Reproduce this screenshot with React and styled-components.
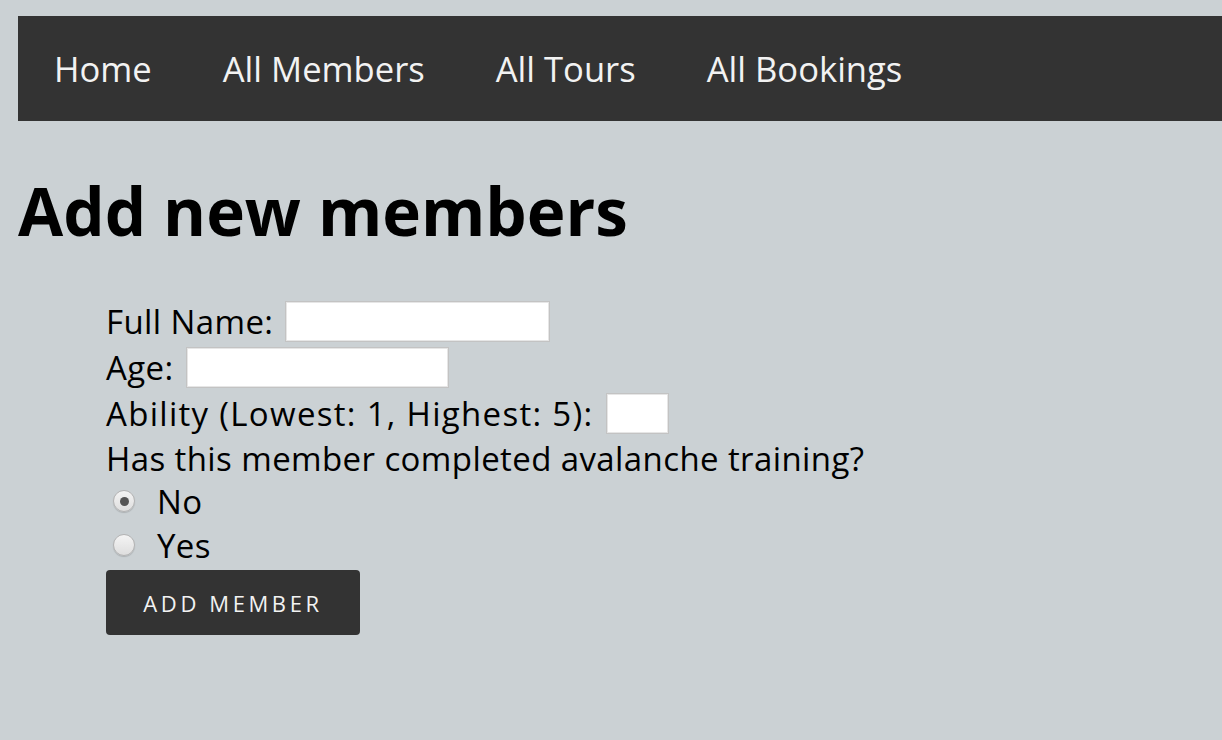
import styled, { createGlobalStyle } from "styled-components";

const GlobalStyle = createGlobalStyle`
  html, body {
    margin: 0;
    padding: 0;
  }

  body {
    background-color: rgb(203, 209, 212);
    font-family: "Open Sans", "Lato", sans-serif;
    color: #000;
  }
`;

const Page = styled.div`
  padding: 16px 0 0 18px;
  min-height: 740px;
  box-sizing: border-box;
`;

const Nav = styled.nav`
  display: flex;
  align-items: center;
  height: 105px;
  background-color: #333333;
`;

const NavLink = styled.a`
  padding: 0 35px 0 36px;
  font-size: 34.6px;
  color: #f2f2f2;
  text-decoration: none;
  cursor: pointer;
`;

const Title = styled.h1`
  margin: 48px 0 45px;
  font-size: 65.5px;
  line-height: 84px;
  font-weight: 700;
`;

const Form = styled.form`
  display: flex;
  flex-direction: column;
  margin-left: 88px;
`;

const Row = styled.label`
  display: flex;
  align-items: center;
  gap: 12px;
  height: ${({ $h }) => $h || 46}px;
  font-size: 33px;
  letter-spacing: ${({ $ls }) => $ls || 0.4}px;
`;

const TextInput = styled.input`
  box-sizing: border-box;
  width: ${({ $w }) => $w}px;
  height: 41px;
  margin: 0;
  padding: 2px 6px;
  border: 1px solid #c3c3c3;
  box-shadow: inset 0 0 0 1px #e6e6e6;
  background: #fff;
  font-size: 24px;
  outline: none;
`;

const Question = styled.p`
  margin: 0;
  height: 42px;
  display: flex;
  align-items: center;
  font-size: 33px;
  letter-spacing: 0.4px;
`;

const Radio = styled.input.attrs({ type: "radio" })`
  appearance: none;
  box-sizing: border-box;
  width: 22px;
  height: 22px;
  margin: 0 0 0 7px;
  border-radius: 50%;
  border: 1px solid #b3b3b3;
  background: linear-gradient(#f4f4f4, #dedede);
  box-shadow: 0 1px 1px rgba(0, 0, 0, 0.15);
  display: grid;
  place-items: center;

  &:checked::after {
    content: "";
    width: 9px;
    height: 9px;
    border-radius: 50%;
    background: #555;
  }
`;

const RadioText = styled.span`
  margin-left: 10px;
`;

const Button = styled.button`
  align-self: flex-start;
  margin-top: 3px;
  width: 254px;
  height: 65px;
  border: none;
  border-radius: 4px;
  background-color: #333333;
  color: #f2f2f2;
  font-family: "Open Sans", "Lato", sans-serif;
  font-size: 22px;
  letter-spacing: 3.6px;
  cursor: pointer;
`;

const App = () => {
  return (
    <Page>
      <GlobalStyle />
      <Nav>
        <NavLink>Home</NavLink>
        <NavLink>All Members</NavLink>
        <NavLink>All Tours</NavLink>
        <NavLink>All Bookings</NavLink>
      </Nav>

      <Title>Add new members</Title>

      <Form onSubmit={(e) => e.preventDefault()}>
        <Row>
          Full Name: <TextInput type="text" $w={265} />
        </Row>
        <Row>
          Age: <TextInput type="text" $w={263} />
        </Row>
        <Row $h={47} $ls={1.3}>
          Ability (Lowest: 1, Highest: 5): <TextInput type="text" $w={63} />
        </Row>
        <Question>Has this member completed avalanche training?</Question>
        <Row $h={44}>
          <Radio name="training" defaultChecked />
          <RadioText>No</RadioText>
        </Row>
        <Row $h={44}>
          <Radio name="training" />
          <RadioText>Yes</RadioText>
        </Row>
        <Button type="submit">ADD MEMBER</Button>
      </Form>
    </Page>
  );
};

export default App;
